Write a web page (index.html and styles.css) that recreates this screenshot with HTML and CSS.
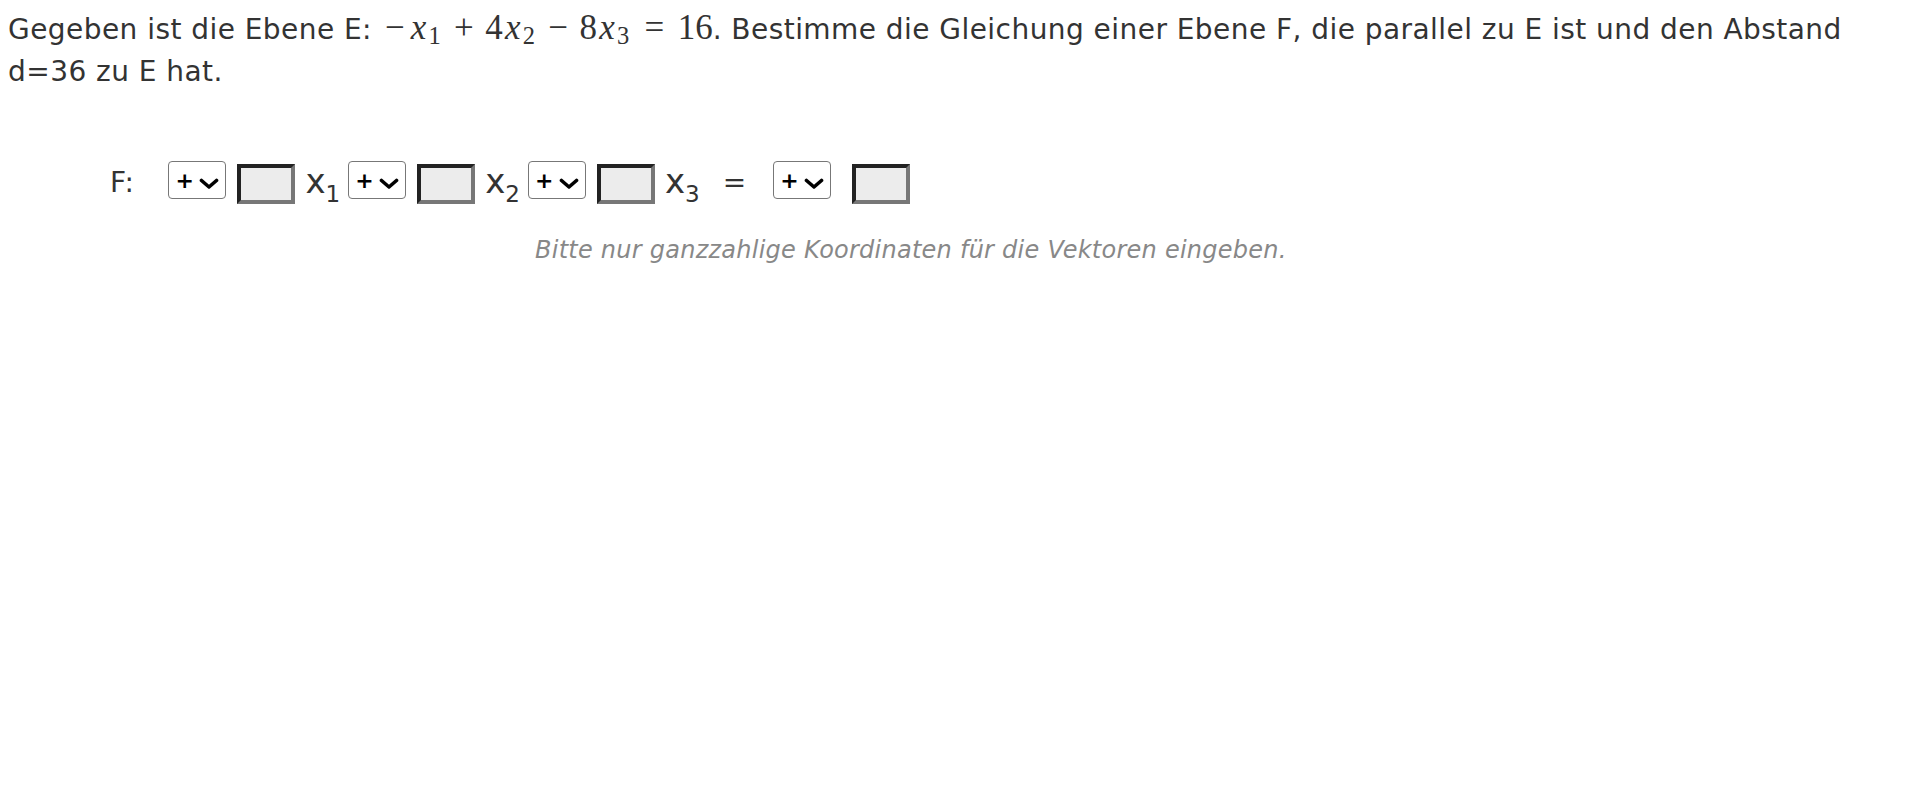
FILE: index.html
```html
<!DOCTYPE html>
<html lang="de">
<head>
<meta charset="utf-8">
<title>Ebene</title>
<link rel="stylesheet" href="styles.css">
</head>
<body>
<div class="task">
  <p class="question">Gegeben ist die Ebene E: <span class="math"><span class="mo">−</span><span class="mi">x</span><sub class="msub">1</sub><span class="bin">+</span><span class="mn">4</span><span class="mi">x</span><sub class="msub">2</sub><span class="bin">−</span><span class="mn">8</span><span class="mi">x</span><sub class="msub">3</sub><span class="rel">=</span><span class="mn">16</span></span>. Bestimme die Gleichung einer Ebene F, die parallel zu E ist und den Abstand d=36 zu E hat.</p>

  <div class="form-row">
    <span class="label">F:</span>
    <span class="sel"><select class="sign"><option>+</option><option>−</option></select><svg class="chev" width="20" height="11" viewBox="0 0 20 11"><path d="M2.5 2.5 L10 9 L17.5 2.5" fill="none" stroke="#000" stroke-width="3.6" stroke-linecap="round" stroke-linejoin="round"/></svg></span>
    <input class="coef" type="text">
    <span class="var">x<sub>1</sub></span>
    <span class="sel"><select class="sign"><option>+</option><option>−</option></select><svg class="chev" width="20" height="11" viewBox="0 0 20 11"><path d="M2.5 2.5 L10 9 L17.5 2.5" fill="none" stroke="#000" stroke-width="3.6" stroke-linecap="round" stroke-linejoin="round"/></svg></span>
    <input class="coef" type="text">
    <span class="var">x<sub>2</sub></span>
    <span class="sel"><select class="sign"><option>+</option><option>−</option></select><svg class="chev" width="20" height="11" viewBox="0 0 20 11"><path d="M2.5 2.5 L10 9 L17.5 2.5" fill="none" stroke="#000" stroke-width="3.6" stroke-linecap="round" stroke-linejoin="round"/></svg></span>
    <input class="coef" type="text">
    <span class="var">x<sub>3</sub></span>
    <span class="eq">=</span>
    <span class="sel"><select class="sign"><option>+</option><option>−</option></select><svg class="chev" width="20" height="11" viewBox="0 0 20 11"><path d="M2.5 2.5 L10 9 L17.5 2.5" fill="none" stroke="#000" stroke-width="3.6" stroke-linecap="round" stroke-linejoin="round"/></svg></span>
    <input class="coef last" type="text">
  </div>

  <p class="hint">Bitte nur ganzzahlige Koordinaten für die Vektoren eingeben.</p>
</div>
</body>
</html>
```
FILE: styles.css
```css
html, body {
  background: #fff;
}
body {
  margin: 8px;
  font-family: "DejaVu Sans", Verdana, sans-serif;
  color: #333;
}
.question {
  margin: 0;
  padding-top: 1px;
  font-size: 28px;
  line-height: 42px;
  letter-spacing: 0.45px;
}
.math {
  font-family: "Liberation Serif", "Times New Roman", serif;
  font-size: 35px;
  line-height: 1;
  letter-spacing: 0;
  white-space: nowrap;
}
.mo, .bin, .rel {
  display: inline-block;
  width: 0.778em;
  text-align: center;
}
.bin {
  margin: 0 0.222em;
}
.rel {
  margin: 0 0.278em;
}
.mi {
  display: inline-block;
  width: 0.572em;
  font-style: italic;
  text-align: center;
}
.msub {
  font-size: 0.7em;
  line-height: 0;
  vertical-align: -0.22em;
  margin-right: 0.07em;
}
.form-row {
  display: flex;
  align-items: flex-start;
  margin-top: 68px;
  padding-left: 102px;
  height: 43px;
}
.label {
  font-size: 28px;
  line-height: 38px;
  letter-spacing: 0.5px;
  margin-top: 3px;
  margin-right: 34px;
}
.sel {
  position: relative;
  display: block;
  width: 58px;
  height: 38px;
}
.sign {
  appearance: none;
  -webkit-appearance: none;
  display: block;
  width: 58px;
  height: 38px;
  box-sizing: border-box;
  border: 1.5px solid #777;
  border-radius: 4px;
  background: #fff;
  font-family: "DejaVu Sans", sans-serif;
  font-size: 22px;
  font-weight: bold;
  color: #000;
  padding: 0 0 0 6px;
  margin: 0;
}
.chev {
  position: absolute;
  left: 31px;
  top: 17px;
  pointer-events: none;
}
.coef {
  display: block;
  box-sizing: border-box;
  width: 58px;
  height: 40px;
  margin: 3px 0 0 11px;
  padding: 0;
  background: #ececec;
  border-style: solid;
  border-width: 4px;
  border-color: #222 #777 #777 #222;
}
.coef.last {
  margin-left: 21px;
}
.var {
  font-size: 34px;
  line-height: 38px;
  margin: 1px 8px 0 10px;
}
.var sub {
  font-size: 23px;
  line-height: 0;
  vertical-align: -9px;
}
.eq {
  font-size: 28px;
  line-height: 38px;
  margin: 3px 27px 0 15px;
}
.hint {
  margin: 28px 0 0 527px;
  font-size: 24px;
  line-height: 36px;
  letter-spacing: 0.25px;
  font-style: italic;
  color: #888;
}
```
